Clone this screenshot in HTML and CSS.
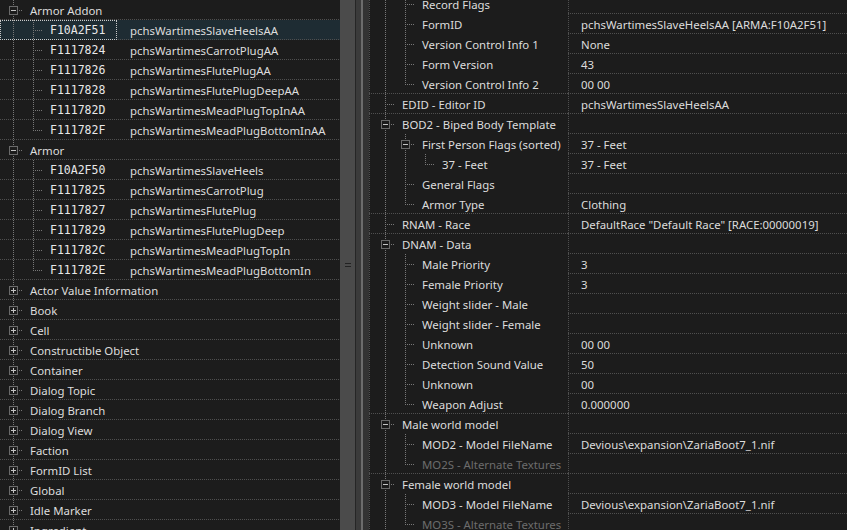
FILE: index.html
```html
<!DOCTYPE html>
<html lang="en">
<head>
  <meta charset="UTF-8">
  <title>Records</title>
  <link rel="stylesheet" href="styles.css">
</head>
<body>
  <div class="app">
    <!-- record tree -->
    <div class="left">
      <div class="lrow root"><div class="ltree"><i class="g tee"><b class="box"></b></i><span class="t">Armor Addon</span></div></div>
      <div class="lrow sel"><div class="ltree"><i class="g pipe"></i><i class="g tee"></i><span class="id">F10A2F51</span></div><div class="lval">pchsWartimesSlaveHeelsAA</div></div>
      <div class="lrow"><div class="ltree"><i class="g pipe"></i><i class="g tee"></i><span class="id">F1117824</span></div><div class="lval">pchsWartimesCarrotPlugAA</div></div>
      <div class="lrow"><div class="ltree"><i class="g pipe"></i><i class="g tee"></i><span class="id">F1117826</span></div><div class="lval">pchsWartimesFlutePlugAA</div></div>
      <div class="lrow"><div class="ltree"><i class="g pipe"></i><i class="g tee"></i><span class="id">F1117828</span></div><div class="lval">pchsWartimesFlutePlugDeepAA</div></div>
      <div class="lrow"><div class="ltree"><i class="g pipe"></i><i class="g tee"></i><span class="id">F111782D</span></div><div class="lval">pchsWartimesMeadPlugTopInAA</div></div>
      <div class="lrow"><div class="ltree"><i class="g pipe"></i><i class="g elbow"></i><span class="id">F111782F</span></div><div class="lval">pchsWartimesMeadPlugBottomInAA</div></div>
      <div class="lrow root"><div class="ltree"><i class="g tee"><b class="box"></b></i><span class="t">Armor</span></div></div>
      <div class="lrow"><div class="ltree"><i class="g pipe"></i><i class="g tee"></i><span class="id">F10A2F50</span></div><div class="lval">pchsWartimesSlaveHeels</div></div>
      <div class="lrow"><div class="ltree"><i class="g pipe"></i><i class="g tee"></i><span class="id">F1117825</span></div><div class="lval">pchsWartimesCarrotPlug</div></div>
      <div class="lrow"><div class="ltree"><i class="g pipe"></i><i class="g tee"></i><span class="id">F1117827</span></div><div class="lval">pchsWartimesFlutePlug</div></div>
      <div class="lrow"><div class="ltree"><i class="g pipe"></i><i class="g tee"></i><span class="id">F1117829</span></div><div class="lval">pchsWartimesFlutePlugDeep</div></div>
      <div class="lrow"><div class="ltree"><i class="g pipe"></i><i class="g tee"></i><span class="id">F111782C</span></div><div class="lval">pchsWartimesMeadPlugTopIn</div></div>
      <div class="lrow"><div class="ltree"><i class="g pipe"></i><i class="g elbow"></i><span class="id">F111782E</span></div><div class="lval">pchsWartimesMeadPlugBottomIn</div></div>
      <div class="lrow root"><div class="ltree"><i class="g tee"><b class="box plus"></b></i><span class="t">Actor Value Information</span></div></div>
      <div class="lrow root"><div class="ltree"><i class="g tee"><b class="box plus"></b></i><span class="t">Book</span></div></div>
      <div class="lrow root"><div class="ltree"><i class="g tee"><b class="box plus"></b></i><span class="t">Cell</span></div></div>
      <div class="lrow root"><div class="ltree"><i class="g tee"><b class="box plus"></b></i><span class="t">Constructible Object</span></div></div>
      <div class="lrow root"><div class="ltree"><i class="g tee"><b class="box plus"></b></i><span class="t">Container</span></div></div>
      <div class="lrow root"><div class="ltree"><i class="g tee"><b class="box plus"></b></i><span class="t">Dialog Topic</span></div></div>
      <div class="lrow root"><div class="ltree"><i class="g tee"><b class="box plus"></b></i><span class="t">Dialog Branch</span></div></div>
      <div class="lrow root"><div class="ltree"><i class="g tee"><b class="box plus"></b></i><span class="t">Dialog View</span></div></div>
      <div class="lrow root"><div class="ltree"><i class="g tee"><b class="box plus"></b></i><span class="t">Faction</span></div></div>
      <div class="lrow root"><div class="ltree"><i class="g tee"><b class="box plus"></b></i><span class="t">FormID List</span></div></div>
      <div class="lrow root"><div class="ltree"><i class="g tee"><b class="box plus"></b></i><span class="t">Global</span></div></div>
      <div class="lrow root"><div class="ltree"><i class="g tee"><b class="box plus"></b></i><span class="t">Idle Marker</span></div></div>
      <div class="lrow root"><div class="ltree"><i class="g tee"><b class="box plus"></b></i><span class="t">Ingredient</span></div></div>
    </div>

    <div class="splitter"><span class="grip"></span></div>

    <!-- record view -->
    <div class="right">
      <div class="list">
        <div class="row"><div class="name"><i class="g pipe"></i><i class="g tee"></i><span class="t">Record Flags</span></div><div class="val"></div></div>
        <div class="row"><div class="name"><i class="g pipe"></i><i class="g tee"></i><span class="t">FormID</span></div><div class="val">pchsWartimesSlaveHeelsAA [ARMA:F10A2F51]</div></div>
        <div class="row"><div class="name"><i class="g pipe"></i><i class="g tee"></i><span class="t">Version Control Info 1</span></div><div class="val">None</div></div>
        <div class="row"><div class="name"><i class="g pipe"></i><i class="g tee"></i><span class="t">Form Version</span></div><div class="val">43</div></div>
        <div class="row grp"><div class="name"><i class="g pipe"></i><i class="g elbow"></i><span class="t">Version Control Info 2</span></div><div class="val">00 00</div></div>
        <div class="row grp"><div class="name"><i class="g tee"></i><span class="t">EDID - Editor ID</span></div><div class="val">pchsWartimesSlaveHeelsAA</div></div>
        <div class="row"><div class="name"><i class="g tee"><b class="box"></b></i><span class="t">BOD2 - Biped Body Template</span></div><div class="val"></div></div>
        <div class="row"><div class="name"><i class="g pipe"></i><i class="g tee"><b class="box"></b></i><span class="t">First Person Flags (sorted)</span></div><div class="val">37 - Feet</div></div>
        <div class="row"><div class="name"><i class="g pipe"></i><i class="g pipe"></i><i class="g elbow"></i><span class="t">37 - Feet</span></div><div class="val">37 - Feet</div></div>
        <div class="row"><div class="name"><i class="g pipe"></i><i class="g tee"></i><span class="t">General Flags</span></div><div class="val"></div></div>
        <div class="row grp"><div class="name"><i class="g pipe"></i><i class="g elbow"></i><span class="t">Armor Type</span></div><div class="val">Clothing</div></div>
        <div class="row grp"><div class="name"><i class="g tee"></i><span class="t">RNAM - Race</span></div><div class="val">DefaultRace "Default Race" [RACE:00000019]</div></div>
        <div class="row"><div class="name"><i class="g tee"><b class="box"></b></i><span class="t">DNAM - Data</span></div><div class="val"></div></div>
        <div class="row"><div class="name"><i class="g pipe"></i><i class="g tee"></i><span class="t">Male Priority</span></div><div class="val">3</div></div>
        <div class="row"><div class="name"><i class="g pipe"></i><i class="g tee"></i><span class="t">Female Priority</span></div><div class="val">3</div></div>
        <div class="row"><div class="name"><i class="g pipe"></i><i class="g tee"></i><span class="t">Weight slider - Male</span></div><div class="val"></div></div>
        <div class="row"><div class="name"><i class="g pipe"></i><i class="g tee"></i><span class="t">Weight slider - Female</span></div><div class="val"></div></div>
        <div class="row"><div class="name"><i class="g pipe"></i><i class="g tee"></i><span class="t">Unknown</span></div><div class="val">00 00</div></div>
        <div class="row"><div class="name"><i class="g pipe"></i><i class="g tee"></i><span class="t">Detection Sound Value</span></div><div class="val">50</div></div>
        <div class="row"><div class="name"><i class="g pipe"></i><i class="g tee"></i><span class="t">Unknown</span></div><div class="val">00</div></div>
        <div class="row grp"><div class="name"><i class="g pipe"></i><i class="g elbow"></i><span class="t">Weapon Adjust</span></div><div class="val">0.000000</div></div>
        <div class="row"><div class="name"><i class="g tee"><b class="box"></b></i><span class="t">Male world model</span></div><div class="val"></div></div>
        <div class="row"><div class="name"><i class="g pipe"></i><i class="g tee"></i><span class="t">MOD2 - Model FileName</span></div><div class="val">Devious\expansion\ZariaBoot7_1.nif</div></div>
        <div class="row grp"><div class="name"><i class="g pipe"></i><i class="g elbow"></i><span class="t dim">MO2S - Alternate Textures</span></div><div class="val"></div></div>
        <div class="row"><div class="name"><i class="g tee"><b class="box"></b></i><span class="t">Female world model</span></div><div class="val"></div></div>
        <div class="row"><div class="name"><i class="g pipe"></i><i class="g tee"></i><span class="t">MOD3 - Model FileName</span></div><div class="val">Devious\expansion\ZariaBoot7_1.nif</div></div>
        <div class="row grp"><div class="name"><i class="g pipe"></i><i class="g elbow"></i><span class="t dim">MO3S - Alternate Textures</span></div><div class="val"></div></div>
      </div>
    </div>
  </div>
</body>
</html>
```

FILE: styles.css
```css
:root {
  --tree: #777;
  --grid: #4f4f4f;
  --ht: repeating-linear-gradient(to right, var(--tree) 0 1px, transparent 1px 2px);
  --vt: repeating-linear-gradient(to bottom, var(--tree) 0 1px, transparent 1px 2px);
  --hg: repeating-linear-gradient(to right, var(--grid) 0 1px, transparent 1px 2px);
  --vg: repeating-linear-gradient(to bottom, var(--grid) 0 1px, transparent 1px 2px);
}
body {
  margin: 0;
  background: #1c1c1c;
  color: #dcdcdc;
  font-family: "Noto Sans", sans-serif;
  font-size: 11.4px;
  overflow: hidden;
}
.app {
  display: flex;
  height: 530px;
}

/* left tree */
.left {
  width: 340px;
  flex: none;
  overflow: hidden;
}
.lrow {
  display: flex;
  height: 20px;
  background: var(--hg) 0 100% / 100% 1px no-repeat;
}
.lrow.sel {
  background: var(--hg) 0 100% / 100% 1px no-repeat, #1e2c33;
}
.ltree {
  width: 117px;
  flex: none;
  display: flex;
  padding-left: 3px;
  box-sizing: border-box;
}
.root .ltree {
  width: auto;
}
.sel .ltree {
  outline: 1px dotted #c8c8c8;
  outline-offset: -1px;
}
.id {
  margin-left: 7px;
  padding-top: 1px;
  line-height: 19px;
  font-family: "DejaVu Sans Mono", monospace;
  font-size: 11.5px;
  color: #e8e8e8;
}
.lval {
  padding: 1px 0 0 13px;
  line-height: 19px;
  white-space: nowrap;
}

/* tree guides */
.g {
  width: 20px;
  height: 20px;
  flex: none;
  display: flex;
  align-items: flex-start;
}
.pipe {
  background: var(--vt) 10px 0 / 1px 100% no-repeat;
}
.tee {
  background: var(--vt) 10px 0 / 1px 100% no-repeat, var(--ht) 10px 10px / 10px 1px no-repeat;
}
.elbow {
  background: var(--vt) 10px 0 / 1px 10px no-repeat, var(--ht) 10px 10px / 10px 1px no-repeat;
}
.box {
  width: 9px;
  height: 9px;
  margin: 6px 0 0 6px;
  border: 1px solid #6a6a6a;
  box-sizing: border-box;
  background: linear-gradient(#c4c4c4, #c4c4c4) center / 5px 1px no-repeat, #1c1c1c;
}
.box.plus {
  background: linear-gradient(#c4c4c4, #c4c4c4) center / 5px 1px no-repeat,
    linear-gradient(#c4c4c4, #c4c4c4) center / 1px 5px no-repeat, #1c1c1c;
}
.t {
  margin-left: 7px;
  padding-top: 1px;
  line-height: 19px;
  white-space: nowrap;
}
.dim {
  color: #6c6c6c;
}

/* splitter */
.splitter {
  width: 29px;
  flex: none;
  display: flex;
  align-items: center;
  background: linear-gradient(to right, #4b4b4b 0 15px, #262626 15px 16px, #3b3b3b 16px 21px, #6c6c6c 21px 23px, #333 23px 29px);
}
.grip {
  width: 6px;
  height: 2px;
  margin-left: 5px;
  border-top: 1px solid #222;
  border-bottom: 1px solid #222;
}

/* record view */
.right {
  flex: 1;
  overflow: hidden;
  background: var(--vg) 0 0 / 1px 100% no-repeat;
}
.list {
  margin-top: -6px;
}
.row {
  display: flex;
  height: 20px;
}
.name {
  width: 199px;
  flex: none;
  display: flex;
  padding-left: 6px;
  box-sizing: border-box;
}
.grp .name {
  background: var(--hg) 0 100% / 100% 1px no-repeat;
}
.val {
  flex: 1;
  padding: 1px 0 0 13px;
  line-height: 19px;
  white-space: nowrap;
  background: var(--vg) 0 0 / 1px 100% no-repeat, var(--hg) 0 100% / 100% 1px no-repeat;
}
```
